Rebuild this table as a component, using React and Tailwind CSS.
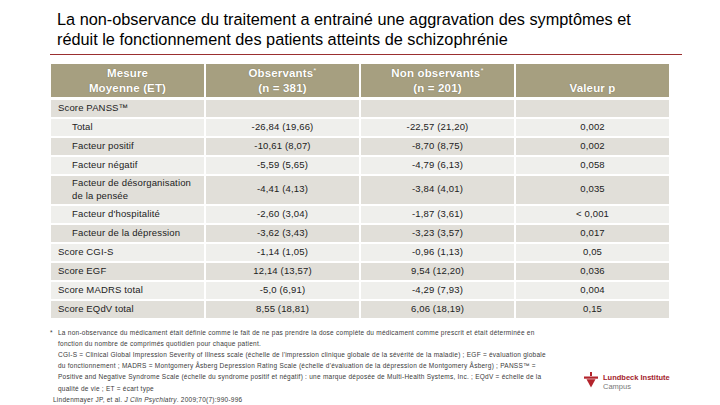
import React from "react";

const rows = [
  { label: "Score PANSS™", sub: false, a: "", b: "", p: "" },
  { label: "Total", sub: true, a: "-26,84 (19,66)", b: "-22,57 (21,20)", p: "0,002" },
  { label: "Facteur positif", sub: true, a: "-10,61 (8,07)", b: "-8,70 (8,75)", p: "0,002" },
  { label: "Facteur négatif", sub: true, a: "-5,59 (5,65)", b: "-4,79 (6,13)", p: "0,058" },
  {
    label: "Facteur de désorganisation",
    label2: "de la pensée",
    sub: true,
    tall: true,
    a: "-4,41 (4,13)",
    b: "-3,84 (4,01)",
    p: "0,035",
  },
  { label: "Facteur d'hospitalité", sub: true, a: "-2,60 (3,04)", b: "-1,87 (3,61)", p: "< 0,001" },
  { label: "Facteur de la dépression", sub: true, a: "-3,62 (3,43)", b: "-3,23 (3,57)", p: "0,017" },
  { label: "Score CGI-S", sub: false, a: "-1,14 (1,05)", b: "-0,96 (1,13)", p: "0,05" },
  { label: "Score EGF", sub: false, a: "12,14 (13,57)", b: "9,54 (12,20)", p: "0,036" },
  { label: "Score MADRS total", sub: false, a: "-5,0 (6,91)", b: "-4,29 (7,93)", p: "0,004" },
  { label: "Score EQdV total", sub: false, a: "8,55 (18,81)", b: "6,06 (18,19)", p: "0,15" },
];

function HeaderCell({ children }) {
  return (
    <div className="flex items-end justify-center bg-[#a69f80] pb-[1px] text-center text-[11.5px] font-bold leading-[15px] text-white [text-shadow:0_0_1px_rgba(80,70,40,0.6)]">
      <div>{children}</div>
    </div>
  );
}

function BodyRow({ row, dark }) {
  const bg = dark ? "bg-[#e1dfd9]" : "bg-[#efefec]";
  const h = row.tall ? "h-[28px]" : "h-[17px]";
  return (
    <div className={`mt-[2px] grid grid-cols-4 gap-x-[2px] ${h}`}>
      <div
        className={`flex flex-col justify-center ${bg} ${row.sub ? "pl-[21px]" : "pl-[7px]"} leading-[12.5px]`}
      >
        <span>{row.label}</span>
        {row.label2 && <span>{row.label2}</span>}
      </div>
      <div className={`flex items-center justify-center ${bg}`}>{row.a}</div>
      <div className={`flex items-center justify-center ${bg}`}>{row.b}</div>
      <div className={`flex items-center justify-center ${bg}`}>{row.p}</div>
    </div>
  );
}

function LundbeckMark() {
  return (
    <svg width="14" height="16" viewBox="0 0 14 16">
      <rect x="6" y="0" width="2" height="4" fill="#b3242c" />
      <rect x="0" y="4.5" width="14" height="2.2" fill="#b3242c" />
      <path d="M2.5 7.2 L11.5 7.2 L7 15.5 Z" fill="#b3242c" />
    </svg>
  );
}

export default function App() {
  return (
    <div className="relative flex h-[405px] w-[720px] flex-col overflow-hidden bg-white font-['Liberation_Sans',Arial,sans-serif] text-[#1a1a1a]">
      <div className="pl-[57px] pt-[9px] text-[16.3px] leading-[20px] text-black">
        <div>La non-observance du traitement a entrainé une aggravation des symptômes et</div>
        <div>réduit le fonctionnement des patients atteints de schizophrénie</div>
      </div>
      <div className="ml-[50px] mt-[5px] h-[3px] w-[632px] bg-[#9b2f30]" />

      <div className="ml-[51px] mt-[9px] w-[618px] text-[9.5px] tracking-[0.15px] text-[#222]">
        <div className="grid h-[33px] grid-cols-4 gap-x-[2px]">
          <HeaderCell>
            Mesure
            <br />
            Moyenne (ET)
          </HeaderCell>
          <HeaderCell>
            Observants<sup className="text-[8px] font-normal">*</sup>
            <br />
            (n = 381)
          </HeaderCell>
          <HeaderCell>
            Non observants<sup className="text-[8px] font-normal">*</sup>
            <br />
            (n = 201)
          </HeaderCell>
          <HeaderCell>Valeur p</HeaderCell>
        </div>
        <div className="h-[1px]" />
        {rows.map((r, i) => (
          <BodyRow key={r.label} row={r} dark={i % 2 === 0} />
        ))}
      </div>

      <div className="mt-[9px] flex">
        <div className="ml-[50px] w-[525px] whitespace-nowrap text-[6.5px] leading-[11.2px] tracking-[0.25px] text-[#3a3a3a]">
          <div className="flex">
            <span className="w-[8px]">*</span>
            <div>
              <div>
                La non-observance du médicament était définie comme le fait de ne pas prendre la dose complète du
                médicament comme prescrit et était déterminée en
              </div>
              <div>fonction du nombre de comprimés quotidien pour chaque patient.</div>
              <div>
                CGI-S = Clinical Global Impression Severity of Illness scale (échelle de l'impression clinique globale
                de la sévérité de la maladie) ; EGF = évaluation globale
              </div>
              <div>
                du fonctionnement ; MADRS = Montgomery Åsberg Depression Rating Scale (échelle d'évaluation de la
                dépression de Montgomery Åsberg) ; PANSS™ =
              </div>
              <div>
                Positive and Negative Syndrome Scale (échelle du syndrome positif et négatif) : une marque déposée de
                Multi-Health Systems, Inc. ; EQdV = échelle de la
              </div>
              <div>qualité de vie ; ET = écart type</div>
            </div>
          </div>
          <div className="pl-[3px]">
            Lindenmayer JP, et al. <i>J Clin Psychiatry</i>. 2009;70(7):990-996
          </div>
        </div>
        <div className="ml-[9px] mt-[45px] flex items-start gap-[5px]">
          <LundbeckMark />
          <div className="mt-[1px] text-[7.5px] leading-[9px]">
            <div className="font-bold text-[#a3222b]">Lundbeck Institute</div>
            <div className="text-[#777]">Campus</div>
          </div>
        </div>
      </div>
    </div>
  );
}
